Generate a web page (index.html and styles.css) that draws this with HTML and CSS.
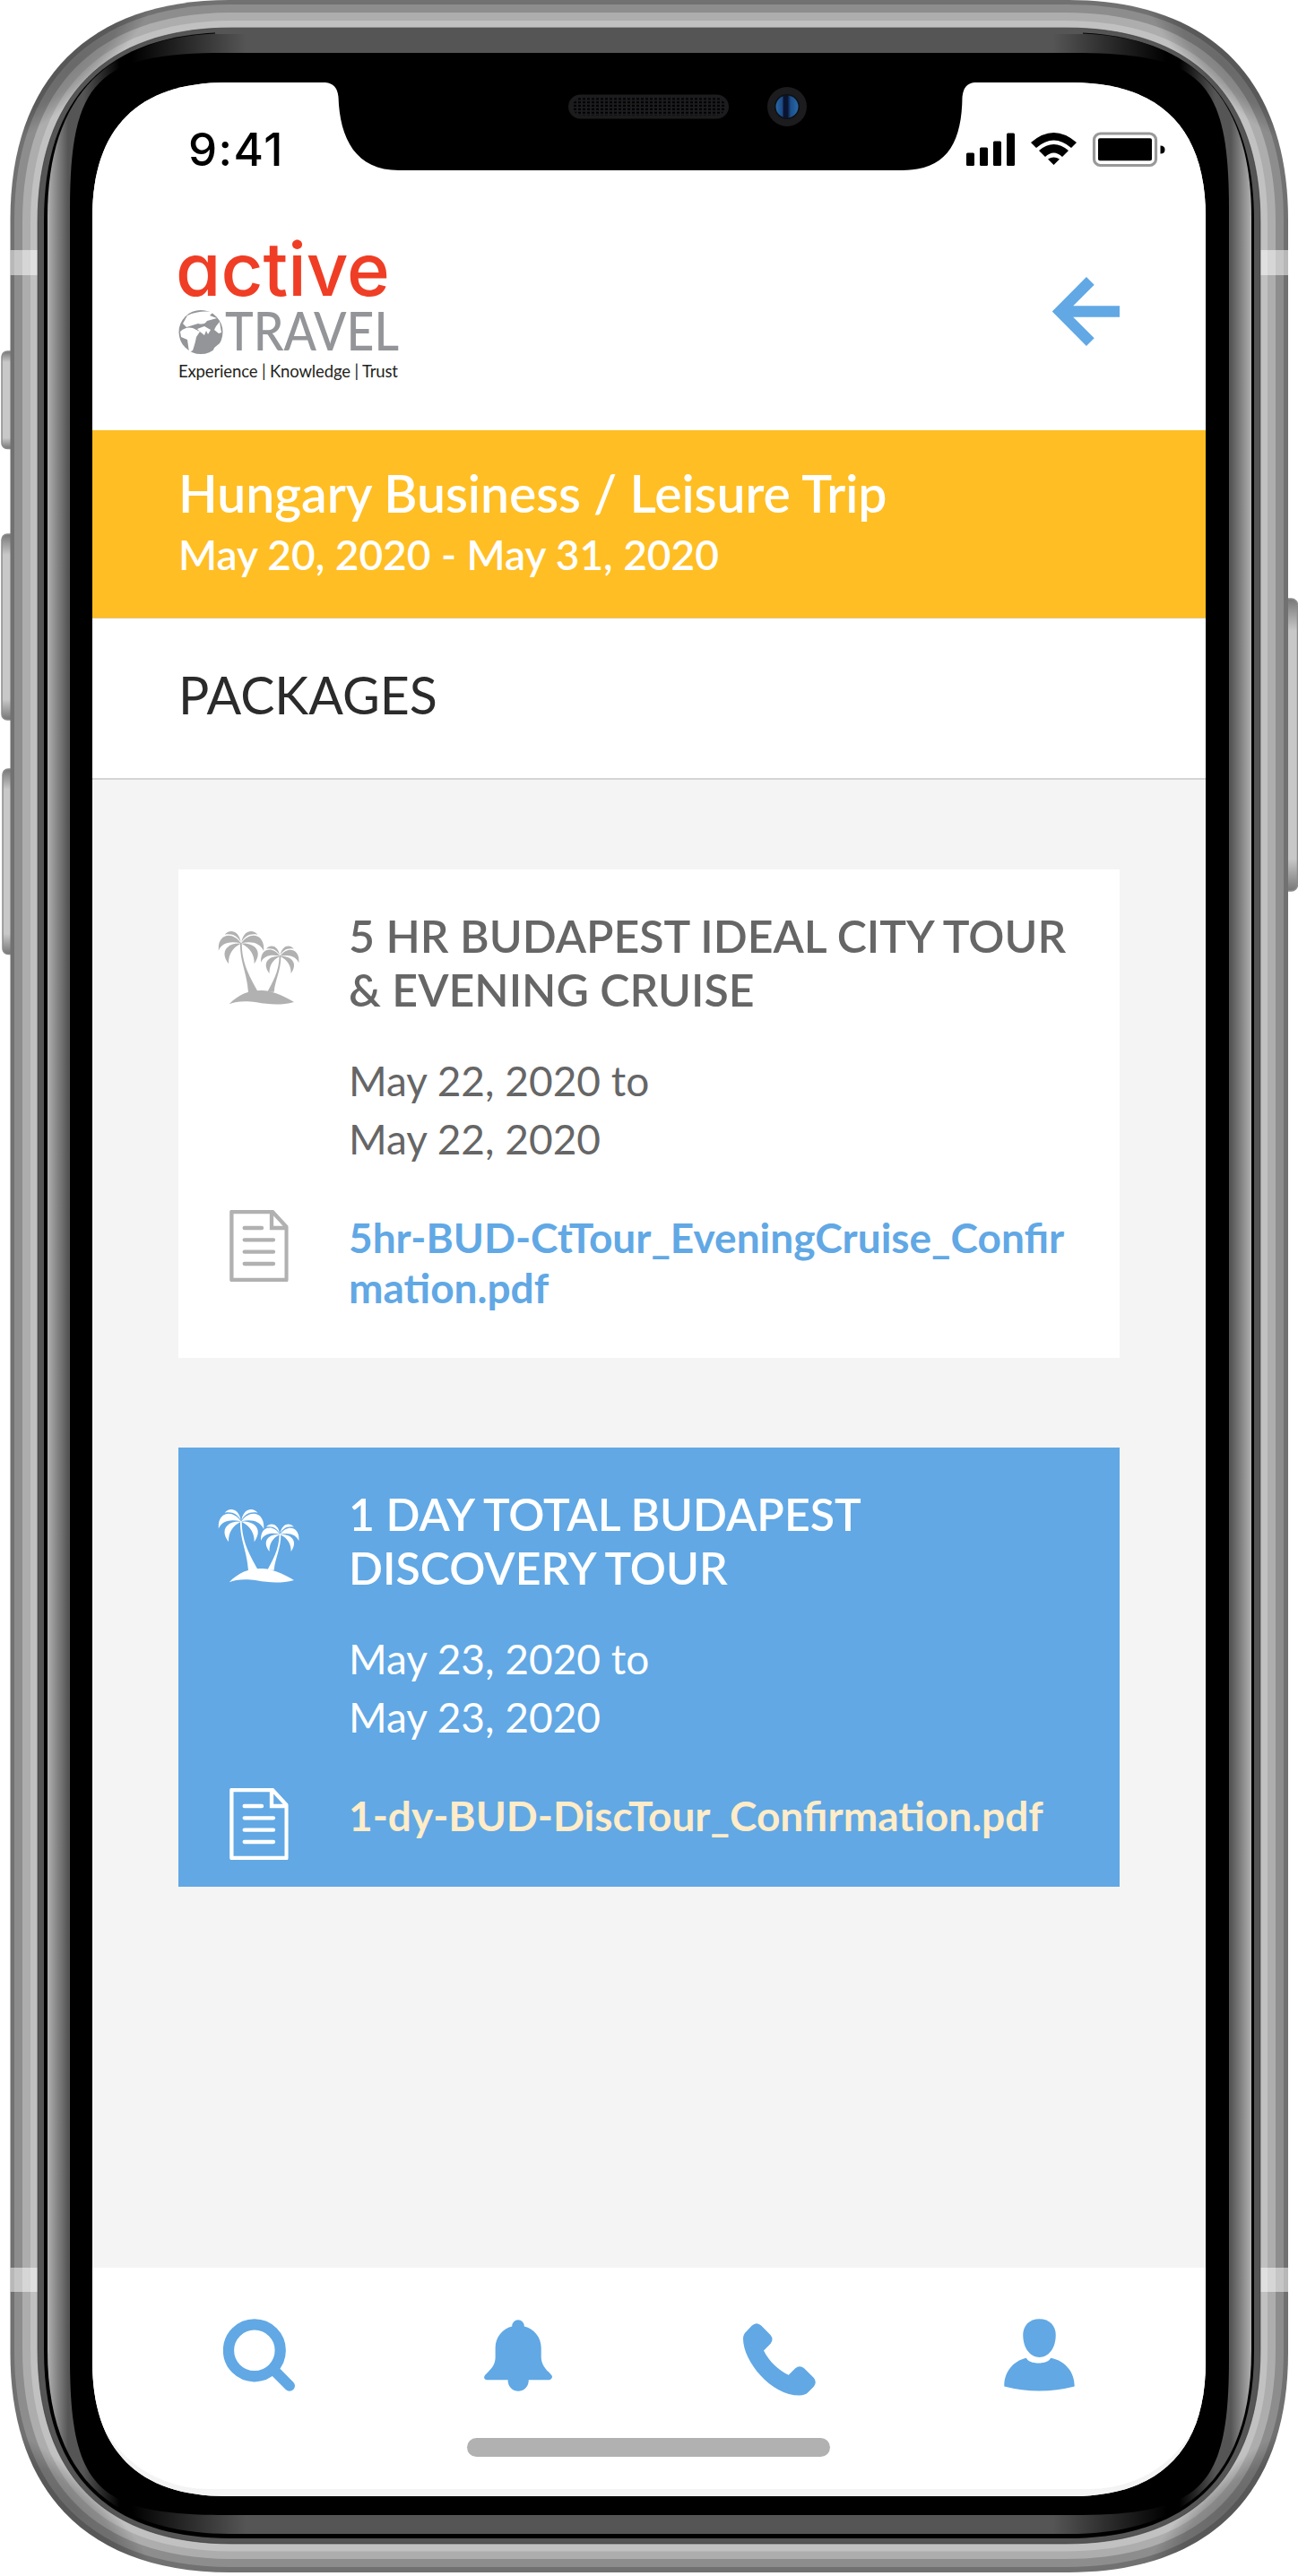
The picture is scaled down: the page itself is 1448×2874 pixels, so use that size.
FILE: index.html
```html
<!DOCTYPE html>
<html lang="en">
<head>
<meta charset="utf-8">
<title>Active Travel – Packages</title>
<link rel="stylesheet" href="styles.css">
</head>
<body>
<svg class="defs" width="0" height="0" aria-hidden="true">
  <symbol id="fronds" viewBox="0 0 154 112">
    <path d="M76,38C68,-2 38,-6 22,13C48,8 64,18 76,38z"/>
    <path d="M76,42C50,2 -3,8 1,67C14,40 40,34 76,42z"/>
    <path d="M76,43C34,40 2,68 35,111C34,82 46,58 76,43z"/>
    <path d="M78,38C86,-2 116,-6 132,13C106,8 90,18 78,38z"/>
    <path d="M78,42C104,2 157,8 153,69C140,42 114,34 78,42z"/>
    <path d="M78,43C120,40 152,68 121,111C122,82 108,58 78,43z"/>
  </symbol>
  <symbol id="palms" viewBox="70 85 272 250">
    <use href="#fronds" x="71" y="86" width="154" height="112"/>
    <use href="#fronds" x="213" y="136" width="130" height="94"/>
    <path d="M145,126C143,190 168,225 172,293H206C180,245 150,200 150,126z"/>
    <path d="M276,168C276,225 250,262 236,291H258C262,248 282,220 281,168z"/>
    <path d="M108,332C140,297 180,284 220,286C262,288 300,311 325,325C280,337 240,333 200,326C160,320 130,323 108,332z"/>
  </symbol>
  <symbol id="doc" viewBox="108 1020 197 241">
    <g fill="none" stroke="currentColor" stroke-width="13">
      <path stroke-linejoin="round" d="M115,1026H252L299,1077V1254H115z"/>
      <path d="M249,1026V1080H299"/>
      <path stroke-linecap="round" d="M158,1080H216M158,1120H255M158,1160H255M158,1200H255"/>
    </g>
  </symbol>
</svg>

<div class="device">
  <svg class="frame" viewBox="0 0 1448 2874" aria-hidden="true">
    <defs>
      <linearGradient id="bezel" gradientUnits="userSpaceOnUse" x1="53" x2="1396" y1="0" y2="0">
        <stop offset="0" stop-color="#b0b0b0"/><stop offset=".017" stop-color="#555"/><stop offset=".03" stop-color="#555"/>
        <stop offset=".06" stop-color="#000"/><stop offset=".07" stop-color="#000"/><stop offset=".165" stop-color="#555"/>
        <stop offset=".835" stop-color="#555"/><stop offset=".93" stop-color="#000"/><stop offset=".94" stop-color="#000"/>
        <stop offset=".97" stop-color="#555"/><stop offset=".983" stop-color="#555"/><stop offset="1" stop-color="#b0b0b0"/>
      </linearGradient>
      <linearGradient id="key" x1="0" x2="0" y1="0" y2="1">
        <stop offset="0" stop-color="#777"/><stop offset=".11" stop-color="#c8c8c8"/><stop offset=".89" stop-color="#c8c8c8"/><stop offset="1" stop-color="#777"/>
      </linearGradient>
      <radialGradient id="shade"><stop offset="0" stop-opacity=".26"/><stop offset=".5" stop-opacity=".2"/><stop offset="1" stop-opacity="0"/></radialGradient>
      <clipPath id="rim"><path d="M11.5,245c0,-157 88,-245 245,-245H1192c157,0 245,88 245,245V2625c0,157 -88,245 -245,245H256.5c-157,0 -245,-88 -245,-245z"/></clipPath>
      <linearGradient id="lens"><stop offset="0" stop-color="#2869a8"/><stop offset=".28" stop-color="#1c4a86"/><stop offset=".36" stop-color="#0a1430"/><stop offset=".52" stop-color="#0a1430"/><stop offset=".66" stop-color="#1c4f8c"/><stop offset="1" stop-color="#2a68a8"/></linearGradient>
      <pattern id="mesh" width="5" height="3.85" patternUnits="userSpaceOnUse" x="639" y="108.5"><rect x="1" y=".8" width="3" height="2" fill="#000"/></pattern>
    </defs>
    <g fill="url(#key)" stroke="#8c8c8c" stroke-width="1.5">
      <rect x="2" y="392" width="26" height="108.500" rx="6"/>
      <rect x="2" y="596" width="26" height="207" rx="6"/>
      <rect x="3" y="858" width="26" height="206.500" rx="6"/>
      <rect x="1420" y="668" width="27.500" height="326" rx="7"/>
    </g>
    <path fill="#717171" d="M11.500,245c0,-157 88,-245 245,-245H1192c157,0 245,88 245,245V2625c0,157 -88,245 -245,245H256.500c-157,0 -245,-88 -245,-245z"/>
    <path fill="#8d8d8d" d="M16,246c0,-154 87,-241 241,-241H1191c154,0 241,87 241,241V2623c0,154 -87,241 -241,241H257c-154,0 -241,-87 -241,-241z"/>
    <path fill="#adadad" d="M25,248c0,-151 83,-234 234,-234H1189c151,0 234,83 234,234V2621c0,151 -83,234 -234,234H259c-151,0 -234,-83 -234,-234z"/>
    <path fill="#c1c1c1" d="M34,249c0,-147 79,-226 226,-226H1188c147,0 226,79 226,226V2620.500c0,147 -79,226 -226,226H260c-147,0 -226,-79 -226,-226z"/>
    <g clip-path="url(#rim)" fill="url(#shade)">
      <ellipse cx="82" cy="72" rx="125" ry="30" transform="rotate(-44 82 72)"/>
      <ellipse cx="1366" cy="72" rx="125" ry="30" transform="rotate(44 1366 72)"/>
      <ellipse cx="82" cy="2798" rx="125" ry="30" transform="rotate(44 82 2798)"/>
      <ellipse cx="1366" cy="2798" rx="125" ry="30" transform="rotate(-44 1366 2798)"/>
    </g>
    <path fill="#fff" fill-opacity=".5" d="M11.500,279H43V307H11.500zM1405,279H1437V307H1405zM11.500,2530H43V2557H11.500zM1405,2530H1437V2557H1405z"/>
    <path fill="#555" stroke="#333" stroke-width=".6" d="M42,248c0,-141 76,-217 217,-217H1189c141,0 217,76 217,217V2621c0,141 -76,217 -217,217H259c-141,0 -217,-76 -217,-217z"/>
    <path d="M49,246c0,-139 71,-210 210,-210H1189c139,0 210,71 210,210V2622c0,139 -71,210 -210,210H259c-139,0 -210,-71 -210,-210z"/>
    <path fill="url(#bezel)" d="M53,242c0,-137 68,-205 205,-205H1191c137,0 205,68 205,205V2622c0,137 -68,205 -205,205H258c-137,0 -205,-68 -205,-205z"/>
    <path fill="#555" d="M240,31H1208V38H240z"/>
    <path d="M78,234c0,-145 30,-175 175,-175H1196c145,0 175,30 175,175V2631c0,145 -30,175 -175,175H253c-145,0 -175,-30 -175,-175z"/>
  </svg>

  <main class="screen">
    <header class="top">
      <div class="status">
        <span class="clock">9:41</span>
        <svg class="indicators" viewBox="0 0 222 40" aria-hidden="true">
          <rect x="0" y="23.500" width="9" height="14.500" rx="1.500"/><rect x="15" y="17.500" width="9" height="20.500" rx="1.500"/><rect x="30" y="10.500" width="9" height="27.500" rx="1.500"/><rect x="45" y="1.500" width="9" height="36.500" rx="1.500"/>
          <path d="M72,12Q97.500,-10 123,12L117,18Q97.500,1 78,18z M81,21Q97.500,7 114,21L107,28Q97.500,19 88,28z M91,30.500Q97.500,26.500 104,30.500L97.500,37z"/>
          <rect x="142.500" y="2" width="69" height="35.500" rx="7" fill="none" stroke="#999" stroke-width="3.200"/>
          <rect x="147" y="7.300" width="60" height="25" rx="2"/>
          <path d="M216.500,15.500q5,0 5,4.500t-5,4.500z"/>
        </svg>
      </div>
      <div class="brandbar">
        <svg class="logo" viewBox="0 0 250 165" role="img" aria-label="Active Travel">
          <text class="logo-active" x="-3" y="64" textLength="239" lengthAdjust="spacingAndGlyphs">active</text>
          <circle cx="25" cy="104.500" r="24.500" fill="#939598"/>
          <path fill="#fff" d="M10,86Q22,80 39,82L35,86L43,89L32,92Q29,97 22,95L9,99L5,95zM2,104Q8,98 16,100L24,104L20,110Q19,116 16,125L12,127L10,113L3,110zM21,101L29,98L36,102L33,107L31,103L29,108L24,104zM42,98L46,93L48,105L45,106L40,102zM40,122L46,117L43,126L38,127z"/>
          <text class="logo-travel" x="52" y="125" textLength="194" lengthAdjust="spacingAndGlyphs">TRAVEL</text>
          <text class="logo-tag" x="0" y="155" textLength="245">Experience | Knowledge | Trust</text>
        </svg>
        <svg class="back" viewBox="378 927 225 231" aria-label="Back"><path fill="none" stroke="currentColor" stroke-width="37" d="M505,940L403,1042.500L505,1145M410,1042.500H603"/></svg>
      </div>
    </header>

    <section class="trip">
      <h1>Hungary Business / Leisure Trip</h1>
      <p>May 20, 2020 - May 31, 2020</p>
    </section>

    <h2 class="section-title">PACKAGES</h2>

    <div class="list">
      <article class="card">
        <svg class="ico palms"><use href="#palms"/></svg>
        <h3>5 HR BUDAPEST IDEAL CITY TOUR<br>&amp; EVENING CRUISE</h3>
        <p class="dates">May 22, 2020 to<br>May 22, 2020</p>
        <svg class="ico doc"><use href="#doc"/></svg>
        <a class="file">5hr-BUD-CtTour_EveningCruise_Confir<br>mation.pdf</a>
      </article>
      <article class="card active">
        <svg class="ico palms"><use href="#palms"/></svg>
        <h3>1 DAY TOTAL BUDAPEST<br>DISCOVERY TOUR</h3>
        <p class="dates">May 23, 2020 to<br>May 23, 2020</p>
        <svg class="ico doc"><use href="#doc"/></svg>
        <a class="file">1-dy-BUD-DiscTour_Confirmation.pdf</a>
      </article>
    </div>

    <footer class="bottom">
      <nav class="tabs">
        <svg class="search" viewBox="746 339 241 243"><circle cx="851" cy="445" r="87" fill="none" stroke="currentColor" stroke-width="37"/><path stroke="currentColor" stroke-width="36" stroke-linecap="round" d="M917,512L969,564"/></svg>
        <svg class="bell" viewBox="63 51 229 243"><path d="M157,76A20.500,22 0 0 1 198,76C232,84 255,114 255,148V182C257,205 270,220 280,229L290,240Q294,246 290,251Q287,256 282,256H213C213,306 143,306 143,256H72Q66,256 64,251Q62,245 66,240L77,229C88,217 100,205 101,182V148C101,114 124,84 157,76z"/></svg>
        <svg class="phone" viewBox="927 66 243 242"><path d="M956,74Q972,58 988,74L1019,105Q1030,119 1019,134L996,157C1014,193 1044,222 1079,239L1101,217Q1116,203 1132,217L1163,248Q1175,262 1164,277L1143,298Q1135,306 1116,307C1020,307 927,192 927,117Q927,103 937,94z"/></svg>
        <svg class="person" viewBox="60 51 238 243"><path d="M179,51C213,51 234,74 234,104C234,152 208,180 179,180C150,180 124,152 124,104C124,74 145,51 179,51z"/><path d="M135,182C143,205 209,205 217,182C270,192 298,234 297,278Q179,308 61,278C59,234 88,192 135,182z"/></svg>
      </nav>
      <div class="home-bar"></div>
    </footer>
  </main>

  <svg class="notch" viewBox="360 60 730 131" aria-hidden="true">
    <path d="M360,60H1090V92H1087Q1075,93 1073.500,108C1073,160 1056,190 1006,190H445C397,190 379,155 377.500,108Q376,93 363,92H360z"/>
    <rect x="634" y="105.500" width="179" height="27" rx="13.500" fill="#1c1c1e"/>
    <rect x="639" y="108.500" width="170" height="20.500" rx="10" fill="url(#mesh)"/>
    <circle cx="878" cy="119" r="22" fill="#1c1c1e"/><circle cx="878" cy="119" r="14" fill="#0d1115"/><circle cx="878" cy="119" r="12.500" fill="url(#lens)"/>
  </svg>
</div>
</body>
</html>
```
FILE: styles.css
```css
:root { --blue: #61a8e5; }
* { box-sizing: border-box; margin: 0; padding: 0; }
body { background: #fff; font-family: Lato, "Open Sans", sans-serif; }
svg { display: block; fill: currentColor; }
.defs { position: absolute; }

.device { position: relative; width: 1448px; height: 2874px; padding: 92px 103px 89px; }
.frame { position: absolute; left: 0; top: 0; width: 1448px; height: 2874px; color: #000; }
.notch { position: absolute; left: 360px; top: 60px; width: 730px; height: 131px; color: #000; }

.screen {
  position: relative; display: flex; flex-direction: column;
  width: 1242px; height: 2693px; background: #f4f4f4;
  clip-path: path("M0,150c0,-99 51,-150 150,-150H1092c99,0 150,51 150,150V2543c0,99 -51,150 -150,150H150c-99,0 -150,-51 -150,-150z");
}

.top { height: 388px; background: #fff; }
.status { display: flex; justify-content: space-between; align-items: flex-start; padding: 55px 45px 0 107px; height: 163px; }
.clock { font: 500 51px/40px Inter, sans-serif; letter-spacing: 1.5px; color: #000; }
.indicators { width: 222px; height: 40px; color: #000; }
.brandbar { display: flex; justify-content: space-between; align-items: flex-start; padding: 0 96px; }
.logo { width: 250px; height: 165px; overflow: visible; margin-top: 11px; }
.logo-active { font: 500 82px Inter, sans-serif; font-feature-settings: "cv11"; fill: #ef3e25; }
.logo-travel { font: 500 59px Lato, sans-serif; fill: #939598; }
.logo-tag { font: 400 18.500px Lato, sans-serif; fill: #231f20; }
.back { width: 75px; height: 77px; margin-top: 54px; color: var(--blue); }

.trip { height: 210px; padding: 35px 96px 0; background: #ffbe23; color: #fff; border-bottom: 1px solid #dcc486; }
.trip h1 { font-size: 57px; line-height: 70px; font-weight: 600; white-space: nowrap; }
.trip p { font-size: 46px; line-height: 68px; font-weight: 600; }

.section-title { height: 180px; padding: 50px 96px 0; background: #fff; border-bottom: 2px solid #d5d5d5; color: #2b2b2b; font-size: 57.200px; line-height: 70px; font-weight: 400; }

.list { flex: 1; display: flex; flex-direction: column; gap: 100px; padding: 100px 96px 0; }
.card { display: grid; grid-template-columns: 146px 1fr; align-items: start; padding: 44px 0 51px 44px; background: #fff; color: #666; }
.card h3 { font-size: 50px; line-height: 60px; font-weight: 600; white-space: nowrap; }
.dates { grid-column: 2; margin: 39px 0 50px; font-size: 46px; line-height: 65px; }
.file { font-size: 46px; line-height: 55.500px; font-weight: 700; color: var(--blue); white-space: nowrap; }
.ico { color: #b1b1b1; }
.palms { width: 90.700px; height: 83.300px; margin-top: 24px; }
.doc { width: 65.700px; height: 80.300px; margin: -3px 0 -22px 13px; }
.card.active { background: var(--blue); color: #fff; }
.active .ico { color: #fff; }
.active .file { color: #ffecc8; }

.bottom { height: 255px; background: #fff; border-bottom: 8px solid #f4f4f4; border-radius: 0 0 130px 130px; }
.tabs { display: flex; justify-content: space-between; align-items: flex-start; padding: 57px 146px 0 146px; height: 190px; color: var(--blue); }
.search { width: 80px; height: 81px; }
.bell { width: 76px; height: 81px; }
.phone { width: 81px; height: 81px; margin: 5px -1px 0 1px; }
.person { width: 79px; height: 81px; }
.home-bar { position: relative; left: -1px; width: 405px; height: 21px; margin: 0 auto; border-radius: 11px; background: #b1b1b1; }
```
